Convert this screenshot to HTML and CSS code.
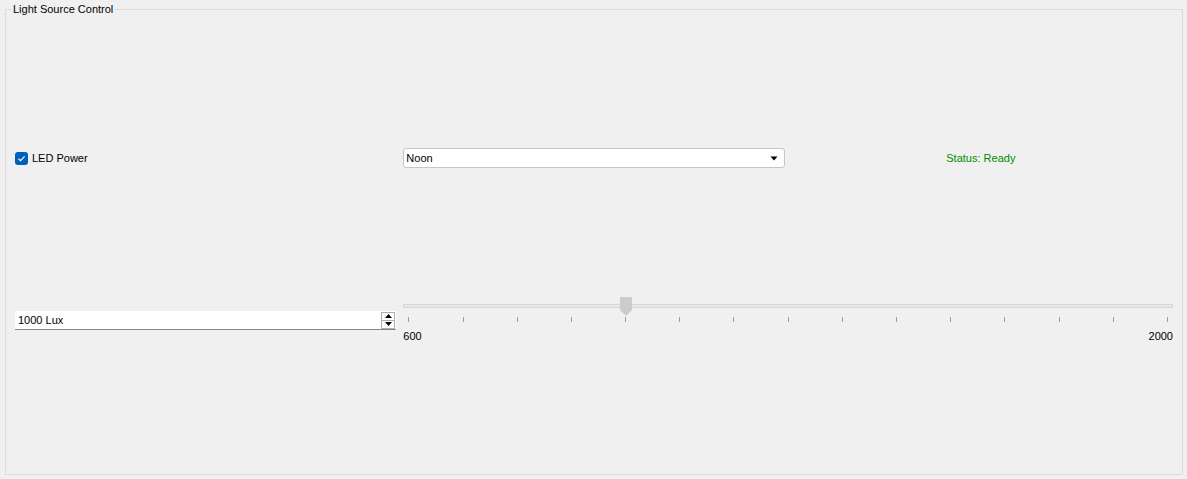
FILE: index.html
```html
<!DOCTYPE html>
<html>
<head>
<meta charset="utf-8">
<link rel="stylesheet" href="styles.css">
</head>
<body>
<div class="group">
  <span class="group-title">Light Source Control</span>
  <div class="grid">
    <label class="check">
      <span class="check-box">
        <svg width="13" height="13" viewBox="0 0 13 13"><path d="M3.5 6.7 L5.6 8.7 L9.6 4.4" fill="none" stroke="#fff" stroke-width="1.2"/></svg>
      </span>
      <span>LED Power</span>
    </label>
    <div class="combo">
      <span>Noon</span>
      <svg class="combo-arrow" width="8" height="5" viewBox="0 0 8 5"><path d="M0.5 0.5 H7.5 L4 4.5 Z" fill="#000"/></svg>
    </div>
    <div class="status">Status: Ready</div>

    <div class="spin">
      <span>1000 Lux</span>
      <div class="spin-btns">
        <div class="spin-btn"><svg width="7" height="4" viewBox="0 0 7 4"><path d="M0 4 H7 L3.5 0 Z" fill="#000"/></svg></div>
        <div class="spin-btn"><svg width="7" height="4" viewBox="0 0 7 4"><path d="M0 0 H7 L3.5 4 Z" fill="#000"/></svg></div>
      </div>
    </div>
    <div class="slider">
      <div class="track">
        <div class="groove"></div>
        <svg class="handle" style="left:217px" width="12" height="19" viewBox="0 0 12 19"><path d="M0 0 H12 V13 L6 19 L0 13 Z" fill="#cccccc"/></svg>
      </div>
      <div class="ticks">
        <i></i><i></i><i></i><i></i><i></i><i></i><i></i><i></i><i></i><i></i><i></i><i></i><i></i><i></i><i></i>
      </div>
      <div class="labels"><span>600</span><span>2000</span></div>
    </div>
  </div>
</div>
</body>
</html>
```

FILE: styles.css
```css
html, body {
  margin: 0;
  padding: 0;
  background: #f0f0f0;
}
body {
  font-family: "Liberation Sans", Arial, sans-serif;
  font-size: 11px;
  color: #000;
  width: 1187px;
  height: 479px;
  overflow: hidden;
  padding: 9px 4px 4px 5px;
  box-sizing: border-box;
}
.group {
  position: relative;
  border: 1px solid #dcdcdc;
  height: 466px;
  box-sizing: border-box;
  padding: 138px 9px 0 9px;
}
.group-title {
  position: absolute;
  left: 5px;
  top: -7px;
  padding: 0 2px;
  background: #f0f0f0;
  line-height: 13px;
}
.grid {
  display: grid;
  grid-template-columns: 1fr 1fr 1fr;
  grid-template-rows: 20px 49px;
  column-gap: 7px;
  row-gap: 129px;
  align-items: center;
}
.check {
  display: flex;
  align-items: center;
  gap: 4px;
}
.check-box {
  width: 13px;
  height: 13px;
  background: #005fb8;
  border-radius: 3px;
  display: flex;
}
.combo {
  height: 20px;
  box-sizing: border-box;
  border: 1px solid #c6c6c6;
  border-radius: 3px;
  background: #fff;
  display: flex;
  align-items: center;
  justify-content: space-between;
  padding: 0 6px 0 2px;
}
.combo-arrow {
  display: block;
}
.status {
  text-align: center;
  color: #008c00;
  padding-right: 3px;
}
.spin {
  align-self: start;
  margin-top: 14px;
  height: 19px;
  box-sizing: border-box;
  background: #fff;
  border-bottom: 1px solid #868686;
  display: flex;
  align-items: center;
  justify-content: space-between;
  padding: 0 1px 0 3px;
}
.spin-btns {
  width: 14px;
  height: 17px;
  box-sizing: border-box;
  border: 1px solid #adadad;
  display: flex;
  flex-direction: column;
}
.spin-btn {
  flex: 1;
  display: flex;
  align-items: center;
  justify-content: center;
}
.spin-btn + .spin-btn {
  border-top: 1px solid #adadad;
}
.spin-btn svg {
  display: block;
}
.slider {
  grid-column: 2 / 4;
  height: 49px;
}
.track {
  position: relative;
  height: 20px;
  padding-top: 7px;
  box-sizing: border-box;
}
.groove {
  height: 4px;
  border: 1px solid #d6d6d6;
  background: #e7e7e7;
  box-sizing: border-box;
}
.handle {
  position: absolute;
  top: 0;
  display: block;
}
.ticks {
  display: flex;
  justify-content: space-between;
  padding: 0 5px;
  height: 5px;
}
.ticks i {
  display: block;
  width: 1px;
  height: 5px;
  background: #a0a0a0;
}
.labels {
  display: flex;
  justify-content: space-between;
  margin-top: 8px;
  line-height: 13px;
}
```
